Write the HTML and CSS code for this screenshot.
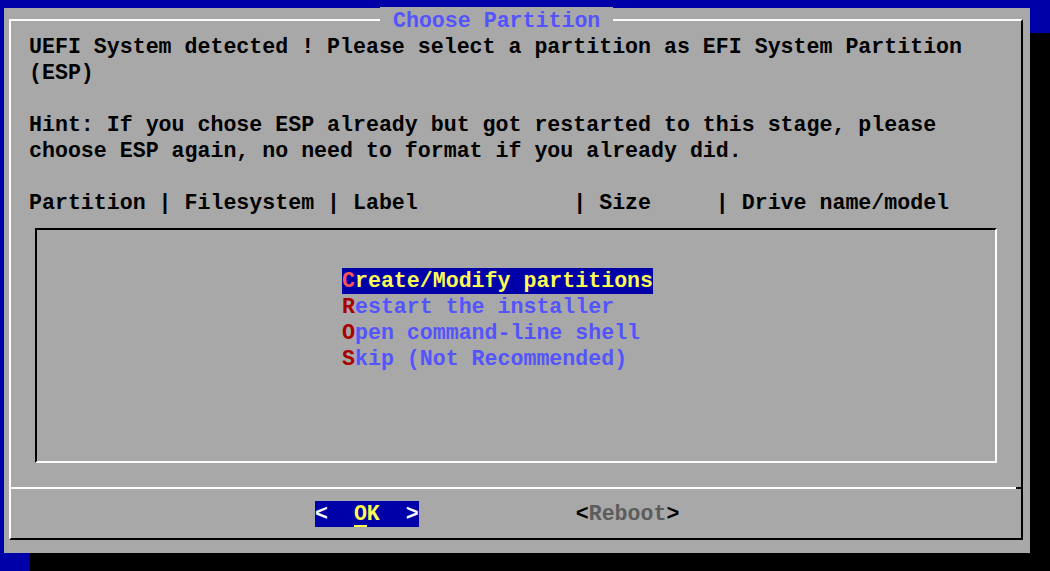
FILE: index.html
```html
<!DOCTYPE html>
<html>
<head>
<meta charset="utf-8">
<link rel="stylesheet" href="styles.css">
</head>
<body>
<div class="screen">
  <div class="dialog">
    <div class="frame">
      <div class="title"> Choose Partition </div>
      <div class="message">
        <p>UEFI System detected ! Please select a partition as EFI System Partition</p>
        <p>(ESP)</p>
        <p class="gap">Hint: If you chose ESP already but got restarted to this stage, please</p>
        <p>choose ESP again, no need to format if you already did.</p>
        <p class="gap">Partition | Filesystem | Label            | Size     | Drive name/model</p>
      </div>
      <div class="listbox">
        <div class="item"><span class="sel"><span class="hk">C</span>reate/Modify partitions</span></div>
        <div class="item"><span class="hk">R</span>estart the installer</div>
        <div class="item"><span class="hk">O</span>pen command-line shell</div>
        <div class="item"><span class="hk">S</span>kip (Not Recommended)</div>
      </div>
      <div class="sep"></div>
      <div class="buttons">
        <div class="btn btn-ok">&lt;  <span class="lbl"><span class="hot">O</span>K</span>  &gt;</div>
        <div class="btn btn-reboot">&lt;<span class="lbl">Reboot</span>&gt;</div>
      </div>
    </div>
  </div>
</div>
</body>
</html>
```
FILE: styles.css
```css
html, body {
  margin: 0;
  padding: 0;
}

body {
  width: 1050px;
  height: 571px;
  overflow: hidden;
  background: #0000a8;
  font-family: "Liberation Mono", "DejaVu Sans Mono", monospace;
  font-weight: bold;
  font-size: 21.6px;
  line-height: 26px;
  color: #000;
}

.screen {
  padding: 8px 0 0 4px;
}

.dialog {
  width: 1026px;
  height: 545px;
  box-sizing: border-box;
  padding: 11px 7px 13px 5px;
  background: #a8a8a8;
  box-shadow: 26px 25px 0 #000;
}

.frame {
  position: relative;
  height: 100%;
  box-sizing: border-box;
  border-style: solid;
  border-width: 2px;
  border-color: #fcfcfc #000 #000 #fcfcfc;
}

.title {
  position: absolute;
  top: -14px;
  left: 369px;
  height: 26px;
  padding-top: 1px;
  box-sizing: border-box;
  background: #a8a8a8;
  color: #5454fc;
  white-space: pre;
}

.message {
  padding: 13px 0 0 18px;
}

.message p {
  margin: 0;
  height: 26px;
  white-space: pre;
}

.message p.gap {
  margin-top: 26px;
}

.listbox {
  margin: 12px 24px 0 24px;
  height: 235px;
  box-sizing: border-box;
  border-style: solid;
  border-width: 2px;
  border-color: #000 #fcfcfc #fcfcfc #000;
  padding: 38px 0 0 305px;
  color: #5454fc;
}

.item {
  height: 26px;
  white-space: pre;
}

.item .hk {
  color: #a80000;
}

.item .sel {
  display: inline-block;
  height: 26px;
  background: #0000a8;
  color: #fcfc54;
}

.item .sel .hk {
  color: #fc5454;
}

.sep {
  position: relative;
  margin-top: 24px;
  height: 2px;
  background: #fcfcfc;
}

.sep::after {
  content: "";
  position: absolute;
  right: 0;
  top: 0;
  width: 5px;
  height: 2px;
  background: #000;
}

.buttons {
  display: flex;
  margin-top: 12px;
  padding-left: 304px;
  gap: 157px;
  height: 26px;
}

.btn {
  height: 26px;
  white-space: pre;
}

.btn-ok {
  background: #0000a8;
  color: #fcfcfc;
}

.btn-ok .lbl {
  color: #fcfc54;
}

.btn-ok .hot {
  display: inline-block;
  height: 26px;
  box-shadow: inset 0 -2px #fcfc54;
}

.btn-reboot {
  color: #000;
}

.btn-reboot .lbl {
  color: #5c5c5c;
}
```
